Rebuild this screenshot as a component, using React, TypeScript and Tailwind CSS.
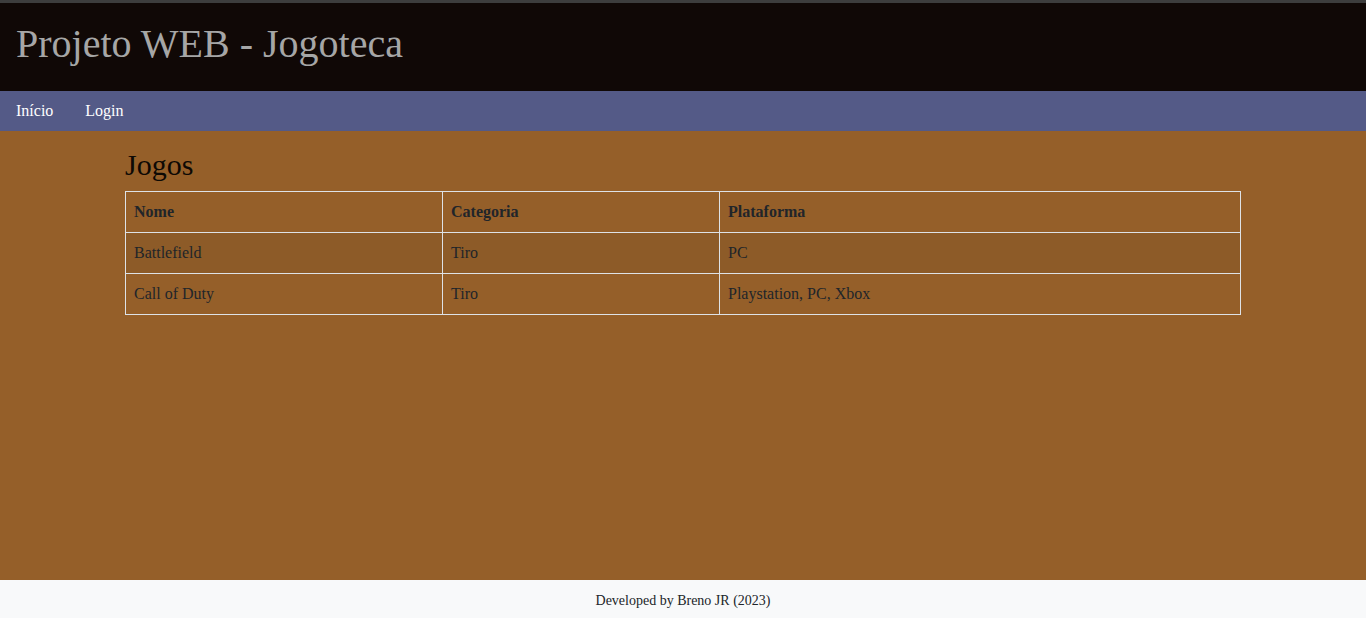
const jogos = [
  { nome: "Battlefield", categoria: "Tiro", plataforma: "PC" },
  { nome: "Call of Duty", categoria: "Tiro", plataforma: "Playstation, PC, Xbox" },
];

export default function App() {
  return (
    <div
      className="min-h-screen flex flex-col bg-[#955f29] text-[#212529]"
      style={{ fontFamily: '"Liberation Serif", "Times New Roman", serif' }}
    >
      <div className="h-[3px] bg-[#3d3d3d]" />
      <header className="bg-[#100806] px-4 pt-[17px] pb-[23px]">
        <h1 className="text-[40px] leading-[48px] text-[#a6a6a6]">Projeto WEB - Jogoteca</h1>
      </header>
      <nav className="bg-[#545a87] flex px-4 py-2 gap-8 text-white text-base leading-6">
        <a href="#">Início</a>
        <a href="#">Login</a>
      </nav>
      <main className="flex-1 pt-[16px]">
        <div className="w-[1116px] mx-auto">
          <h2 className="text-[30px] leading-[36px] text-[#0d0904] mb-2">Jogos</h2>
          <table className="w-full border-collapse text-base leading-6">
            <thead>
              <tr>
                <th className="w-[317px] border border-[#dee2e6] px-2 py-2 text-left font-bold">Nome</th>
                <th className="w-[277px] border border-[#dee2e6] px-2 py-2 text-left font-bold">Categoria</th>
                <th className="border border-[#dee2e6] px-2 py-2 text-left font-bold">Plataforma</th>
              </tr>
            </thead>
            <tbody>
              {jogos.map((j, i) => (
                <tr key={j.nome} className={i % 2 === 0 ? "bg-[#8d5b28]" : ""}>
                  <td className="border border-[#dee2e6] px-2 py-2">{j.nome}</td>
                  <td className="border border-[#dee2e6] px-2 py-2">{j.categoria}</td>
                  <td className="border border-[#dee2e6] px-2 py-2">{j.plataforma}</td>
                </tr>
              ))}
            </tbody>
          </table>
        </div>
      </main>
      <footer className="h-[38px] bg-[#f8f9fa] flex items-center justify-center pt-[3px] text-sm text-[#212529]">
        Developed by Breno JR (2023)
      </footer>
    </div>
  );
}
